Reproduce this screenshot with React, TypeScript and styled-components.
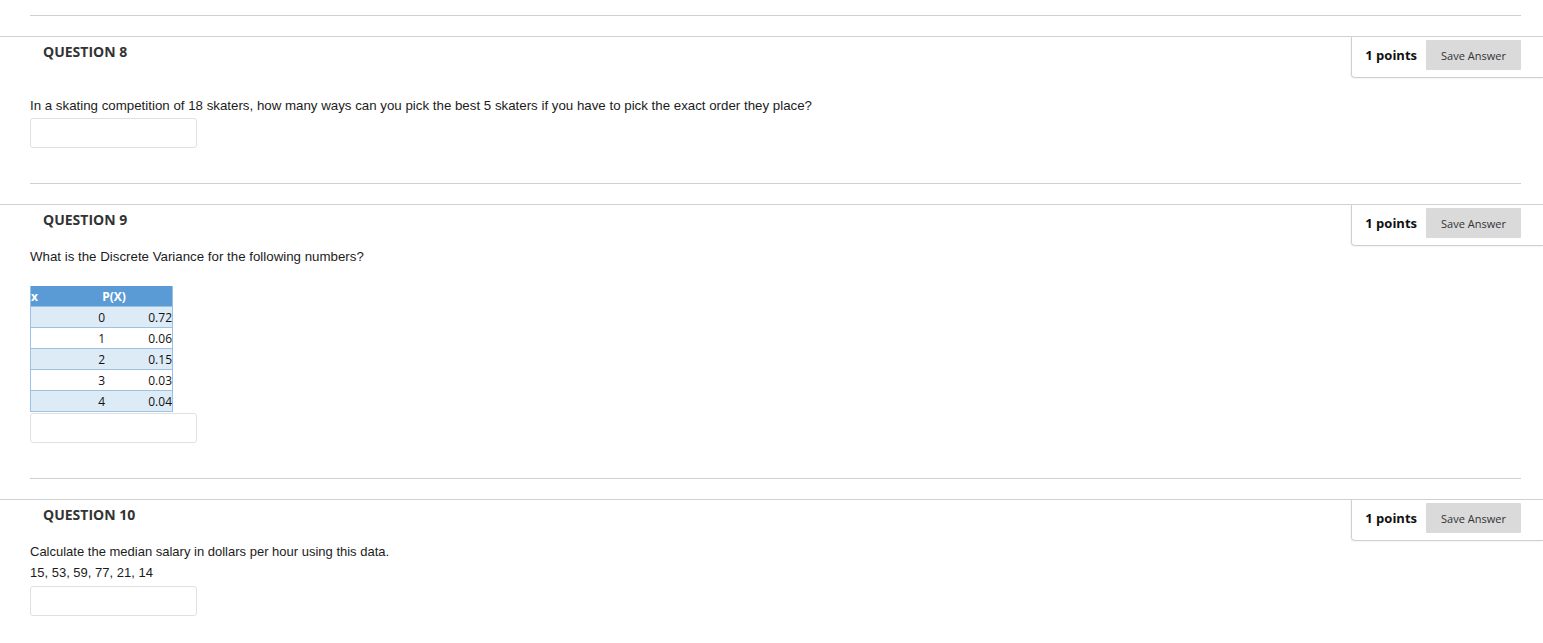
import React, { FC, ReactNode } from "react";
import styled, { createGlobalStyle } from "styled-components";

const GlobalStyle = createGlobalStyle`
  body {
    margin: 0;
    background: #fff;
    font-family: "Liberation Sans", Arial, sans-serif;
  }
`;

const Page = styled.div`
  padding-top: 15px;
  width: 1543px;
`;

const Block = styled.section`
  display: flex;
  flex-direction: column;
`;

const Divider = styled.hr`
  margin: 0 22px 20px 30px;
  border: 0;
  border-top: 1px solid #d0d0d0;
  height: 0;
`;

const HeaderRow = styled.div`
  display: flex;
  justify-content: space-between;
  align-items: flex-start;
  border-top: 1px solid #d0d0d0;
`;

const QuestionLabel = styled.h3`
  margin: 0;
  padding: 7px 0 0 43px;
  font-family: "Open Sans", sans-serif;
  font-weight: 700;
  font-size: 14px;
  line-height: 16px;
  color: #333;
`;

const PointsBox = styled.div`
  display: flex;
  align-items: center;
  gap: 9px;
  padding: 3px 22px 7px 13px;
  border-left: 1px solid #d0d0d0;
  border-bottom: 1px solid #d0d0d0;
  border-bottom-left-radius: 4px;
  box-shadow: -1px 1px 1px rgba(0, 0, 0, 0.04);
`;

const Points = styled.span`
  font-family: "Open Sans", sans-serif;
  font-weight: 700;
  font-size: 13px;
  color: #111;
`;

const SaveButton = styled.button`
  width: 95px;
  height: 30px;
  border: 0;
  border-radius: 1px;
  background: #dadada;
  color: #333;
  font-family: "Open Sans", sans-serif;
  font-size: 11px;
  cursor: pointer;
`;

const Body = styled.div<{ $top: number }>`
  padding: ${(p) => p.$top}px 0 35px 30px;
`;

const Text = styled.p<{ $after?: number; $size?: number }>`
  margin: 0 0 ${(p) => p.$after ?? 0}px;
  font-size: ${(p) => p.$size ?? 13.3}px;
  line-height: 21px;
  color: #1c1c1c;
`;

const AnswerInput = styled.input<{ $mt?: number }>`
  display: block;
  box-sizing: border-box;
  width: 167px;
  height: 30px;
  margin-top: ${(p) => p.$mt ?? 3}px;
  border: 1px solid #e0e0e0;
  border-radius: 3px;
  background: #fff;
`;

const Table = styled.div`
  width: 143px;
  box-sizing: border-box;
  border-left: 1px solid #9bc2e6;
  border-right: 1px solid #9bc2e6;
  font-family: "Open Sans", sans-serif;
  font-size: 12px;
`;

const HeadRow = styled.div`
  display: flex;
  align-items: center;
  height: 21px;
  background: #5b9bd5;
  color: #fff;
  font-weight: 700;
  border-bottom: 1px solid #9bc2e6;
  box-sizing: border-box;
`;

const HeadCell = styled.span<{ $w: number }>`
  width: ${(p) => p.$w}px;
  text-align: center;
  &:first-child {
    text-align: left;
  }
`;

const Row = styled.div<{ $shade: boolean }>`
  display: grid;
  grid-template-columns: 74px 1fr;
  align-items: center;
  height: 21px;
  box-sizing: border-box;
  background: ${(p) => (p.$shade ? "#ddebf7" : "#fff")};
  border-bottom: 1px solid #9bc2e6;
  color: #111;
`;

const Num = styled.span`
  text-align: right;
`;

interface QuestionProps {
  number: number;
  top?: number;
  children?: ReactNode;
}

const Question: FC<QuestionProps> = ({ number, top = 0, children }) => (
  <Block>
    <Divider />
    <HeaderRow>
      <QuestionLabel>QUESTION {number}</QuestionLabel>
      <PointsBox>
        <Points>1 points</Points>
        <SaveButton>Save Answer</SaveButton>
      </PointsBox>
    </HeaderRow>
    <Body $top={top}>{children}</Body>
  </Block>
);

const rows = [
  ["0", "0.72"],
  ["1", "0.06"],
  ["2", "0.15"],
  ["3", "0.03"],
  ["4", "0.04"],
];

const App: FC = () => (
  <Page>
    <GlobalStyle />
    <Question number={8} top={17}>
      <Text>
        In a skating competition of 18 skaters, how many ways can you pick the best 5 skaters if you
        have to pick the exact order they place?
      </Text>
      <AnswerInput type="text" $mt={2} />
    </Question>
    <Question number={9}>
      <Text $after={19}>What is the Discrete Variance for the following numbers?</Text>
      <Table>
        <HeadRow>
          <HeadCell $w={52}>x</HeadCell>
          <HeadCell $w={62}>P(X)</HeadCell>
        </HeadRow>
        {rows.map(([x, p], i) => (
          <Row key={x} $shade={i % 2 === 0}>
            <Num>{x}</Num>
            <Num>{p}</Num>
          </Row>
        ))}
      </Table>
      <AnswerInput type="text" $mt={1} />
    </Question>
    <Question number={10}>
      <Text $size={13}>Calculate the median salary in dollars per hour using this data.</Text>
      <Text $size={13}>15, 53, 59, 77, 21, 14</Text>
      <AnswerInput type="text" $mt={3} />
    </Question>
  </Page>
);

export default App;
